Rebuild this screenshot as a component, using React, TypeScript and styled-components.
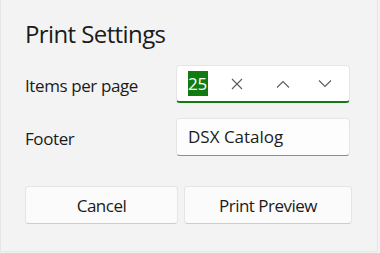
import React from 'react';
import styled, { createGlobalStyle } from 'styled-components';

const Global = createGlobalStyle`
  html, body {
    margin: 0;
    padding: 0;
    background: #f3f3f3;
  }
  body {
    font-family: "Open Sans", "Noto Sans", sans-serif;
    color: #1b1b1b;
  }
`;

const Dialog = styled.div`
  box-sizing: border-box;
  width: 378px;
  height: 252px;
  padding: 18px 24px 0 24px;
  border: 1px solid #e6e6e6;
  border-top: none;
  background: #f3f3f3;
`;

const Title = styled.h1`
  margin: 0;
  font-size: 24px;
  line-height: 32px;
  font-weight: 400;
  letter-spacing: -0.6px;
`;

const Form = styled.div`
  margin-top: 15px;
  display: grid;
  grid-template-columns: 151px 174px;
  row-gap: 15px;
  align-items: center;
`;

const Label = styled.div`
  font-size: 17px;
  line-height: 24px;
  padding-top: 3px;
  letter-spacing: -0.4px;
`;

const Field = styled.div<{ $focused?: boolean }>`
  box-sizing: border-box;
  height: 38px;
  display: flex;
  align-items: center;
  background: ${p => (p.$focused ? '#ffffff' : '#fdfdfd')};
  border: 1px solid #e5e5e5;
  border-bottom: ${p => (p.$focused ? '2px solid #107c10' : '1px solid #8d8d8d')};
  border-radius: 4px;
  padding-left: 11px;
  padding-right: 3px;
  font-size: 17px;
`;

const Value = styled.span`
  flex: 1;
  line-height: 24px;
`;

const Selected = styled.span`
  background: #107c10;
  color: #ffffff;
  line-height: 25px;
  display: inline-block;
  letter-spacing: -0.3px;
  padding-right: 1px;
`;

const IconButton = styled.span<{ $gap?: number }>`
  width: 42px;
  height: 34px;
  display: flex;
  align-items: center;
  justify-content: center;
  margin-right: ${p => p.$gap ?? 0}px;
  color: #5c5c5c;
`;

const Actions = styled.div`
  margin-top: 30px;
  display: flex;
  gap: 6px;
`;

const Button = styled.button<{ $w: number }>`
  box-sizing: border-box;
  width: ${p => p.$w}px;
  height: 38px;
  background: #fbfbfb;
  border: 1px solid #e5e5e5;
  border-bottom-color: #cccccc;
  border-radius: 4px;
  font-family: inherit;
  font-size: 17px;
  letter-spacing: -0.5px;
  color: #1b1b1b;
  padding: 0;
`;

const Close = () => (
  <svg width="12" height="12" viewBox="0 0 12 12">
    <path d="M1 1 L11 11 M11 1 L1 11" stroke="currentColor" strokeWidth="1.1" fill="none" />
  </svg>
);

const Chevron = ({ up }: { up?: boolean }) => (
  <svg width="14" height="8" viewBox="0 0 14 8">
    <path
      d={up ? 'M1 7.5 L7 1.5 L13 7.5' : 'M1 0.5 L7 6.5 L13 0.5'}
      stroke="currentColor"
      strokeWidth="1.1"
      fill="none"
    />
  </svg>
);

export default function App() {
  return (
    <>
      <Global />
      <Dialog>
        <Title>Print Settings</Title>
        <Form>
          <Label>Items per page</Label>
          <Field $focused>
            <Value>
              <Selected>25</Selected>
            </Value>
            <IconButton $gap={4}>
              <Close />
            </IconButton>
            <IconButton>
              <Chevron up />
            </IconButton>
            <IconButton>
              <Chevron />
            </IconButton>
          </Field>
          <Label>Footer</Label>
          <Field>
            <Value>DSX Catalog</Value>
          </Field>
        </Form>
        <Actions>
          <Button $w={153}>Cancel</Button>
          <Button $w={168}>Print Preview</Button>
        </Actions>
      </Dialog>
    </>
  );
}
